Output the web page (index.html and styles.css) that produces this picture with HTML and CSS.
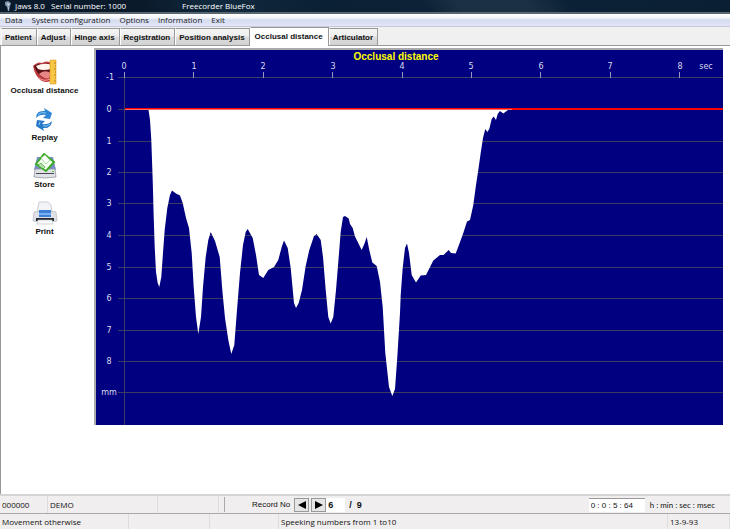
FILE: index.html
```html
<!DOCTYPE html>
<html lang="en">
<head>
<meta charset="utf-8">
<title>Jaws 8.0 - Freecorder BlueFox</title>
<link rel="stylesheet" href="styles.css">
</head>
<body>
<header class="titlebar">
  <svg class="app-icon" viewBox="0 0 12 12" aria-hidden="true"><path d="M2 2l3-1 3 2-1 3-1 5H5L4 7 2 5z" fill="#8296ab"/><path d="M4 3l3 1-2 2zM5 7l1 1v3" fill="#d5e2ee"/></svg>
  <span class="app-name">Jaws 8.0</span>
  <span class="serial">Serial number: 1000</span>
  <span class="product">Freecorder BlueFox</span>
</header>
<nav class="menu">
  <button type="button">Data</button>
  <button type="button">System configuration</button>
  <button type="button">Options</button>
  <button type="button">Information</button>
  <button type="button">Exit</button>
</nav>
<div class="tabs" role="tablist">
  <button type="button" role="tab">Patient</button>
  <button type="button" role="tab">Adjust</button>
  <button type="button" role="tab">Hinge axis</button>
  <button type="button" role="tab">Registration</button>
  <button type="button" role="tab">Position analysis</button>
  <button type="button" role="tab" class="active" aria-selected="true">Occlusal distance</button>
  <button type="button" role="tab">Articulator</button>
</div>
<main class="panel">
  <aside class="tools">
    <button type="button">
      <svg viewBox="0 0 26 26" aria-hidden="true">
        <path d="M1 7Q6 2 10 4Q14 1 21 4L22 19Q17 25 10 22Q3 18 1 7z" fill="#c23b40"/>
        <path d="M2 7Q7 4 11 5Q16 3 21 6L20 15Q15 20 10 18Q5 15 2 7z" fill="#5d1219"/>
        <path d="M4 7Q12 3 20 6L19 10Q11 12 6 10z" fill="#fff5ee"/>
        <path d="M7 15Q12 10 19 14L17 19Q11 20 7 15z" fill="#e88585"/>
        <path d="M7 19Q12 23 18 20" fill="none" stroke="#f0a09a"/>
        <path d="M18 1h6v24h-6z" fill="#f7c645" stroke="#dc9a22" stroke-width=".6"/>
        <path d="M22 4h2M23 7h1M22 10h2M23 13h1M22 16h2M23 19h1M22 22h2" stroke="#a46b12" stroke-width=".7"/>
      </svg>
      <span>Occlusal distance</span>
    </button>
    <button type="button">
      <svg viewBox="0 0 26 26" aria-hidden="true">
        <path d="M5 12Q5 4 14 5L13 2 21 7 19 13 12 12 15 9Q9 8 5 12z" fill="#2f86d4"/>
        <path d="M7 9Q10 5 15 7" fill="none" stroke="#7fc2f2"/>
        <path d="M21 15Q20 23 12 22L13 25 5 20 6 14 14 15 11 18Q17 19 21 15z" fill="#2678c8"/>
        <path d="M8 19l1-3M12 20q4 1 7-2" fill="none" stroke="#8bccf5"/>
      </svg>
      <span>Replay</span>
    </button>
    <button type="button">
      <svg viewBox="0 0 26 26" aria-hidden="true">
        <path d="M5 4h16l3 13H2z" fill="#7791c8"/>
        <path d="M3 16h20l1 8q-11 2-22 0z" fill="#e1e2e8" stroke="#8b8d98" stroke-width=".7"/>
        <path d="M4 20h18v1H4z" fill="#454750"/><path d="M20 18h2v1h-2z" fill="#57c93c"/>
        <path d="M4 11L12 1 22 9 14 18z" fill="#f5fff2" stroke="#3eaa27" stroke-width="2"/>
        <path d="M9 5l4-3 5 5-4 4z" fill="#fff" stroke="#79c766" stroke-width=".6"/>
        <path d="M6 12l3-2 4 4-2 2z" fill="#b9dcb2" stroke="#3eaa27" stroke-width=".7"/>
      </svg>
      <span>Store</span>
    </button>
    <button type="button">
      <svg viewBox="0 0 26 26" aria-hidden="true">
        <path d="M7 2h9l3 3 1 8H5z" fill="#f3f4f7" stroke="#b7bac1" stroke-width=".7"/>
        <path d="M2 12q11-3 22 0l1 9q-12 3-24 0z" fill="#dfe1e6" stroke="#b5b8be" stroke-width=".7"/>
        <path d="M7 10h12v7H7z" fill="#3f80d6"/><path d="M7 13h12v2H7z" fill="#76b2f4"/>
        <path d="M4 18h18v3H4z" fill="#252930"/><path d="M6 20h14l1 4H5z" fill="#f8f9fa" stroke="#b7bac1" stroke-width=".6"/>
      </svg>
      <span>Print</span>
    </button>
  </aside>
  <section class="chart">
    <svg viewBox="96 50 627 375" role="img" aria-label="Occlusal distance in mm over seconds">
      <g stroke="#3b3c62" stroke-width="1">
        <path d="M118 77.5H723M118 109.5H723M118 141.5H723M118 172.5H723M118 203.5H723M118 235.5H723M118 267.5H723M118 298.5H723M118 330.5H723M118 361.5H723M118 392.5H723M124.5 72V425"/>
      </g>
      <path d="M124.5 72v6M193.500 72v6M263.500 72v6M332.500 72v6M402.500 72v6M471.500 72v6M540.500 72v6M610.500 72v6M679.500 72v6" stroke="#9899bd"/>
      <path fill="#fff" d="M125 109V110H148.500L150 120 151.300 140 152.700 180 153.700 217 154.700 247 156 272 157.700 283 159.300 287 161.300 277 162.700 257 164.700 230 167.300 208 170 195 172 190.500 176 193.500 180 195.500 182.700 203 186 218 189 228 191.700 253 193.700 287 196 317 198.300 334 201 317 203 287 205.700 257 208.300 240 210.700 232 215 241 219.700 257 222.300 290 225 318 228.300 340 231.300 354 234.300 345 237 310 240 273 243 245 245.700 232 247.700 229 252.700 238 256 255 259 275 263.300 278 268.300 270 274 267 278.300 260 281.700 247 284 240.500 287.700 248 290.700 268 294 303 296 308 298.700 303 302 290 305.700 266 309.300 250 314 236 316.700 234 320.700 240 323 257 325.700 290 328.300 317 330.700 323.500 333.300 317 336 290 338.300 262 340.700 232 343 217 345 216 348.700 218.500 350 224 352.700 228 355 236.500 361.700 250 364.700 243 366.700 237 369.300 250 372.300 262.500 376.700 266 380 282 382.700 307 385.300 353 389 387 392.300 396 395 389 397.300 357 400 313 400.700 295 402.700 268 405 248 407 243.500 409 253 411.700 275 416 282.500 420.700 275.500 426 275 433.300 260.500 440 255 443.500 255 448.700 250 451 253 455.700 253.500 459.300 244 463.300 233 467 221.500 470 220 473.300 205 476 185 478.300 170 480.700 153 483 138 485.300 129 487.300 132 489.300 129 491.700 119 493.700 116.500 496 120 497.700 114 500 111 503.300 113.500 508 110 512 109z"/>
      <path d="M125 108h598v2H512V109H125z" fill="#f00"/>
      <path d="M125 109.500H512" stroke="#ff6a6a"/>
      <text class="chart-title" x="396" y="60">Occlusal distance</text>
      <g class="x-label">
        <text x="124" y="69">0</text><text x="194" y="69">1</text><text x="263" y="69">2</text><text x="333" y="69">3</text><text x="402" y="69">4</text><text x="471" y="69">5</text><text x="541" y="69">6</text><text x="610" y="69">7</text><text x="680" y="69">8</text><text x="706" y="69">sec</text>
      </g>
      <g class="y-label">
        <text x="110" y="80">-1</text><text x="109" y="112">0</text><text x="109" y="144">1</text><text x="109" y="175">2</text><text x="109" y="206">3</text><text x="109" y="238">4</text><text x="109" y="270">5</text><text x="109" y="301">6</text><text x="109" y="333">7</text><text x="109" y="364">8</text><text x="109" y="395">mm</text>
      </g>
    </svg>
  </section>
</main>
<div class="recordbar">
  <span class="patient-id">000000</span>
  <span class="patient-name">DEMO</span>
  <span class="blank"></span>
  <div class="record">
    <label for="record">Record No</label>
    <button type="button" aria-label="Previous record"><svg viewBox="0 0 10 10"><path d="M10 0v10L0 5z"/></svg></button>
    <button type="button" aria-label="Next record"><svg viewBox="0 0 10 10"><path d="M0 0v10l10-5z"/></svg></button>
    <input id="record" value="6">
    <span class="total">/&nbsp; 9</span>
    <input id="time" class="time" value="0 : 0 : 5 : 64">
    <label for="time" class="units">h : min : sec : msec</label>
  </div>
</div>
<footer class="status">
  <span>Movement otherwise</span><span></span><span></span><span>Speeking numbers from 1 to10</span><span>13-9-93</span>
</footer>
</body>
</html>
```
FILE: styles.css
```css
* { box-sizing: border-box; }
body {
  margin: 0;
  min-height: 100vh;
  display: flex;
  flex-direction: column;
  background: #fff;
  color: #111;
  font: 8px/12px "Open Sans", "Noto Sans", sans-serif;
}
button, input { font: inherit; color: inherit; margin: 0; }
button { padding: 0; border: 0; background: none; white-space: nowrap; }
.titlebar {
  display: grid;
  grid-template-columns: 12px 36px 130px 1fr;
  height: 14px;
  padding-left: 3px;
  border-bottom: 2px solid #59656f;
  background: linear-gradient(60deg, #0a1a2b 0 20%, #122a3e 30%, #0a2033 45%, #0d2236 58%, #1b3042 63%, #1b3042 72%, #0b2236 78%, #0a1f32);
  color: #fff;
}
.app-icon { width: 12px; height: 12px; }
.product { padding-left: 1px; }
.menu {
  display: flex;
  gap: 9px;
  height: 13px;
  padding-left: 5px;
  border-bottom: 1px solid #c5c9dc;
  background: linear-gradient(#fff, #f4f6fc 30%, #d5dcf0 50%, #e2e7f7);
  color: #222;
}
.tabs {
  display: flex;
  align-items: flex-end;
  height: 19px;
  padding-left: 1px;
  border-bottom: 1px solid #999;
  background: #f0f0f0;
  font: bold 8px/12px "Liberation Sans", sans-serif;
}
.tabs button {
  height: 17px;
  padding: 1px 4px 0 3px;
  border: 1px solid #999;
  border-bottom: 0;
  border-left-color: #fff;
  background: linear-gradient(#f5f5f5, #ededed 45%, #dcdcdc 50%, #d2d2d2);
}
.tabs .active { height: 19px; padding: 0 5px 1px 4px; margin-bottom: -1px; background: #fff; }
.panel {
  flex: 1;
  display: grid;
  grid-template-columns: 93px 1fr;
  padding: 2px 7px 0 0;
  border-left: 1px solid #999;
}
.tools {
  display: flex;
  flex-direction: column;
  gap: 9px;
  align-items: center;
  padding: 11px 6px 0 0;
  font: bold 8px/12px "Liberation Sans", sans-serif;
}
.tools button { display: flex; flex-direction: column; align-items: center; }
.tools svg { width: 26px; height: 26px; }
.chart { align-self: start; border: solid #aaa; border-width: 2px 0 0 2px; background: #000080; }
.chart svg { display: block; width: 100%; }
.chart text { text-anchor: middle; }
.chart-title { fill: #ff0; font: bold 10px "Liberation Sans", sans-serif; }
.x-label, .y-label { fill: #dcdcec; font: 8px "DejaVu Sans", sans-serif; }
.recordbar {
  display: grid;
  grid-template-columns: 48px 110px 61px 1fr;
  align-items: center;
  height: 20px;
  border-top: 2px solid #d4d4d4;
  border-bottom: 1px solid #aaa;
  background: #f0eeee;
}
.recordbar > span { height: 17px; padding: 3px 0 0 2px; border-right: 1px solid #ddd; }
.record {
  display: flex;
  align-items: center;
  height: 15px;
  margin-left: 5px;
  padding: 0 15px 0 27px;
  border-left: 1px solid #aaa;
  font: 8px/12px "Liberation Sans", sans-serif;
}
.record button { display: grid; place-items: center; width: 15px; height: 14px; margin-left: 2px; border: 1px solid #999; background: #e6e6e6; }
.record button:first-of-type { margin-left: 4px; }
.record button svg { width: 8px; height: 8px; }
.record input { width: 19px; height: 14px; padding: 0 2px; border: 0; background: #fff; font-weight: bold; }
.record #record, .total { font-size: 9px; font-weight: bold; }
.total { margin-left: 4px; }
.record .time { width: 56px; margin-left: auto; border-top: 1px solid #999; font-weight: normal; }
.units { margin-left: 5px; font-family: Lato, sans-serif; }
.status {
  display: grid;
  grid-template-columns: 129px 81px 69px 1fr 62px;
  height: 15px;
  background: #f0eeee;
}
.status span { padding: 2px 2px 0; border-right: 1px solid #ddd; }
```
